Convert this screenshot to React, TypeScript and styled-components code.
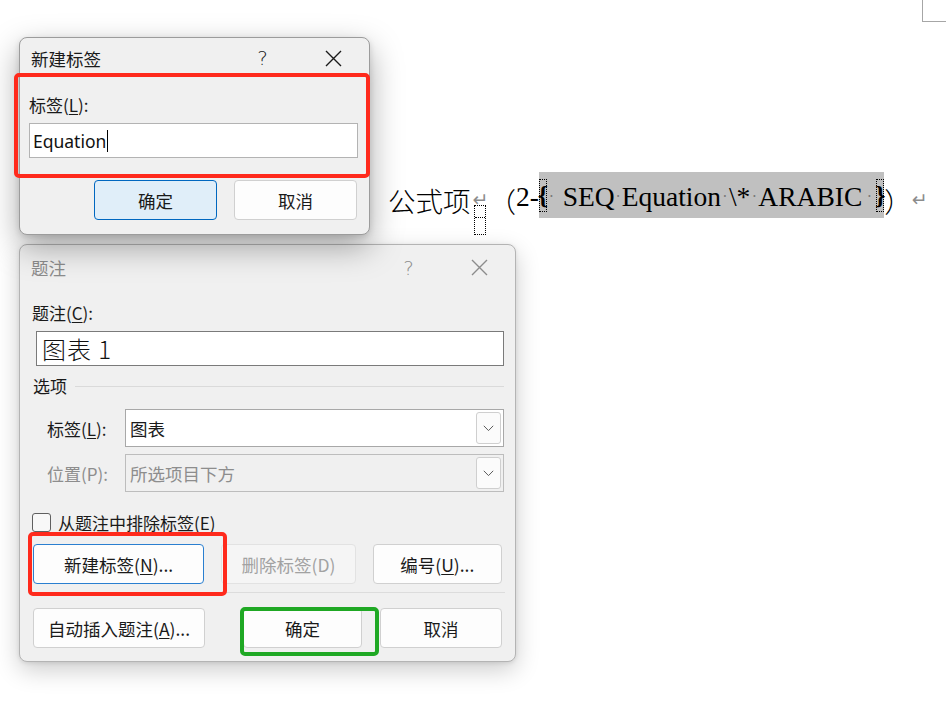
import styled, { createGlobalStyle } from 'styled-components';

const GlobalStyle = createGlobalStyle`
  html, body {
    margin: 0;
    padding: 0;
    background: #ffffff;
  }
  body {
    font-family: "Noto Sans CJK SC", "Noto Sans", sans-serif;
  }
`;

const UI_FONT = `"Noto Sans CJK SC", "Noto Sans", sans-serif`;
const DOC_LATIN = `"Liberation Serif", "Noto Sans CJK SC", serif`;

const Desktop = styled.div`
  position: relative;
  width: 946px;
  height: 703px;
  overflow: hidden;
  background: #ffffff;
`;

const CornerMark = styled.div`
  position: absolute;
  left: 922px;
  top: 0;
  width: 24px;
  height: 21px;
  border-left: 1px solid #a6a6a6;
  border-bottom: 1px solid #a6a6a6;
`;

/* ---------- document line ---------- */

const DocLine = styled.div`
  position: absolute;
  left: 388px;
  top: 172px;
  height: 46px;
  display: flex;
  align-items: center;
  color: #000;
`;

const CjkRun = styled.span`
  font-family: "Noto Sans CJK SC", sans-serif;
  font-size: 27.5px;
  font-weight: 300;
  line-height: 46px;
  padding-top: 10px;
`;

const LatinRun = styled.span`
  font-family: ${DOC_LATIN};
  font-size: 27.5px;
  line-height: 46px;
  padding-top: 4px;
`;

const ParaMarkWrap = styled.span<{ $gap?: number }>`
  position: relative;
  display: inline-flex;
  margin-left: ${(p) => p.$gap ?? 0}px;
`;

const ParaMark = styled.span`
  font-family: "DejaVu Sans", sans-serif;
  font-size: 19px;
  color: #8c8c8c;
  padding-top: 8px;
`;

const AnchorMark = styled.span`
  position: absolute;
  left: 1px;
  top: 25px;
  width: 12px;
  height: 30px;
  border: 1px dotted #000;
  box-sizing: border-box;
  &::after {
    content: '';
    position: absolute;
    left: 0;
    right: 0;
    top: 11px;
    border-top: 1px dotted #000;
  }
`;

const FieldShade = styled.span`
  display: inline-flex;
  align-items: center;
  height: 46px;
  background: #c0c0c0;
`;

const Brace = styled.span`
  display: inline-flex;
  align-items: center;
  justify-content: center;
  width: 8px;
  height: 33px;
  border: 1px dotted #000;
  box-sizing: border-box;
  font-family: ${DOC_LATIN};
  font-weight: bold;
  font-size: 26px;
  line-height: 1;
  padding-top: 2px;
  overflow: visible;
`;

const SpaceDot = styled.span<{ $w?: number }>`
  display: inline-block;
  width: ${(p) => p.$w ?? 8}px;
  text-align: center;
  color: #7a7a7a;
  font-family: "DejaVu Sans", sans-serif;
  font-size: 15px;
  padding-top: 4px;
`;

/* ---------- dialogs ---------- */

const Window = styled.div<{ $x: number; $y: number; $w: number; $h: number; $active?: boolean }>`
  position: absolute;
  left: ${(p) => p.$x}px;
  top: ${(p) => p.$y}px;
  width: ${(p) => p.$w}px;
  height: ${(p) => p.$h}px;
  box-sizing: border-box;
  background: #f0f0f0;
  border: 1px solid ${(p) => (p.$active ? '#9c9c9c' : '#b4b4b4')};
  border-radius: 8px;
  box-shadow: ${(p) =>
    p.$active
      ? '0 12px 32px rgba(0,0,0,0.34), 0 2px 6px rgba(0,0,0,0.12)'
      : '0 8px 24px rgba(0,0,0,0.2), 0 1px 4px rgba(0,0,0,0.1)'};
  font-family: ${UI_FONT};
  font-size: 17px;
  color: #1a1a1a;
  display: flex;
  flex-direction: column;
`;

const TitleBar = styled.div<{ $h: number }>`
  height: ${(p) => p.$h}px;
  flex-shrink: 0;
  display: flex;
  align-items: center;
  padding-left: 11px;
`;

const Title = styled.span<{ $inactive?: boolean }>`
  font-size: 17.5px;
  color: ${(p) => (p.$inactive ? '#8c8c8c' : '#1a1a1a')};
`;

const CaptionButtons = styled.div`
  margin-left: auto;
  display: flex;
  height: 100%;
`;

const CaptionButton = styled.div<{ $inactive?: boolean }>`
  width: 71px;
  height: 100%;
  display: flex;
  align-items: center;
  justify-content: center;
  color: ${(p) => (p.$inactive ? '#8c8c8c' : '#1a1a1a')};
  font-family: "DejaVu Sans", sans-serif;
  font-size: 20px;
  font-weight: 300;
`;

const Body = styled.div<{ $pad: string }>`
  padding: ${(p) => p.$pad};
  display: flex;
  flex-direction: column;
`;

const FieldLabel = styled.div<{ $top: number; $bottom: number }>`
  margin-top: ${(p) => p.$top}px;
  margin-bottom: ${(p) => p.$bottom}px;
  line-height: 24px;
  font-size: 17px;
`;

const Key = styled.span`
  text-decoration: underline;
  text-underline-offset: 2px;
  text-decoration-thickness: 1px;
`;

const TextInput = styled.div<{ $dark?: boolean; $big?: boolean; $ml?: number }>`
  height: 35px;
  box-sizing: border-box;
  margin-left: ${(p) => p.$ml ?? 0}px;
  background: #ffffff;
  border: 1px solid ${(p) => (p.$dark ? '#7a7a7a' : '#b3b3b3')};
  display: flex;
  align-items: center;
  padding-left: ${(p) => (p.$big ? 5 : 3)}px;
  font-size: ${(p) => (p.$big ? 24 : 17.5)}px;
  font-family: ${(p) => (p.$big ? `"Noto Sans CJK SC", sans-serif` : `"Noto Sans", "Noto Sans CJK SC", sans-serif`)};
  font-weight: ${(p) => (p.$big ? 300 : 400)};
  letter-spacing: ${(p) => (p.$big ? '1px' : '0')};
  color: #111;
`;

const Caret = styled.span`
  display: inline-block;
  width: 1px;
  height: 22px;
  background: #000;
  margin-left: 1px;
`;

const ButtonRow = styled.div<{ $top: number; $justify?: string; $ml?: number; $mr?: number }>`
  display: flex;
  justify-content: ${(p) => p.$justify ?? 'flex-start'};
  gap: 17px;
  margin-top: ${(p) => p.$top}px;
  margin-left: ${(p) => p.$ml ?? 0}px;
  margin-right: ${(p) => p.$mr ?? 0}px;
`;

const ButtonGroup = styled.div`
  display: flex;
  gap: 18px;
  margin-left: auto;
`;

type Variant = 'normal' | 'default' | 'focused' | 'disabled';

const Button = styled.div<{ $w: number; $variant?: Variant }>`
  width: ${(p) => p.$w}px;
  height: 40px;
  box-sizing: border-box;
  border-radius: 4px;
  display: flex;
  align-items: center;
  justify-content: center;
  font-size: 17.5px;
  background: ${(p) =>
    p.$variant === 'default' ? '#e0eef9' : p.$variant === 'disabled' ? '#f5f5f5' : '#fdfdfd'};
  border: 1px solid
    ${(p) =>
      p.$variant === 'default'
        ? '#0067c0'
        : p.$variant === 'focused'
          ? '#2a7fd0'
          : p.$variant === 'disabled'
            ? '#e2e2e2'
            : '#d0d0d0'};
  color: ${(p) => (p.$variant === 'disabled' ? '#a2a2a2' : '#1a1a1a')};
`;

const GroupHeader = styled.div`
  margin-top: 7px;
  margin-left: 1px;
  height: 24px;
  display: flex;
  align-items: center;
  gap: 8px;
  &::after {
    content: '';
    flex: 1;
    height: 1px;
    background: #dadada;
    margin-top: 2px;
  }
`;

const SelectRow = styled.div<{ $top: number; $disabled?: boolean }>`
  display: flex;
  align-items: center;
  margin-top: ${(p) => p.$top}px;
  color: ${(p) => (p.$disabled ? '#8d8d8d' : '#1a1a1a')};
`;

const SelectLabel = styled.div`
  width: 78px;
  padding-left: 15px;
`;

const Select = styled.div<{ $disabled?: boolean }>`
  flex: 1;
  height: 38px;
  box-sizing: border-box;
  display: flex;
  align-items: center;
  padding: 2px 2px 2px 4px;
  background: ${(p) => (p.$disabled ? '#f0f0f0' : '#ffffff')};
  border: 1px solid ${(p) => (p.$disabled ? '#bdbdbd' : '#a8a8a8')};
  font-size: 17.5px;
`;

const DropButton = styled.div`
  margin-left: auto;
  width: 25px;
  height: 32px;
  box-sizing: border-box;
  border: 1px solid #cfcfcf;
  border-radius: 3px;
  background: #fbfbfb;
  display: flex;
  align-items: center;
  justify-content: center;
`;

const CheckRow = styled.div`
  margin-top: 21px;
  display: flex;
  align-items: center;
  gap: 7px;
  height: 19px;
`;

const CheckBox = styled.div`
  width: 19px;
  height: 19px;
  box-sizing: border-box;
  border: 1px solid #5f5f5f;
  border-radius: 3px;
  background: #f8f8f8;
`;

const Separator = styled.div`
  margin-top: 8px;
  margin-left: -2px;
  margin-right: -1px;
  height: 1px;
  background: #dcdcdc;
`;

/* ---------- annotation frames ---------- */

const Frame = styled.div<{ $x: number; $y: number; $w: number; $h: number; $color: string }>`
  position: absolute;
  left: ${(p) => p.$x}px;
  top: ${(p) => p.$y}px;
  width: ${(p) => p.$w}px;
  height: ${(p) => p.$h}px;
  box-sizing: border-box;
  border: 4px solid ${(p) => p.$color};
  border-radius: 5px;
  pointer-events: none;
`;

const Chevron = () => (
  <svg width="11" height="7" viewBox="0 0 11 7">
    <polyline points="0.8,0.8 5.5,5.6 10.2,0.8" fill="none" stroke="#5c5c5c" strokeWidth="1" />
  </svg>
);

const CloseIcon = ({ color }: { color: string }) => (
  <svg width="17" height="17" viewBox="0 0 17 17">
    <path d="M1 1 L16 16 M16 1 L1 16" stroke={color} strokeWidth="1.4" fill="none" />
  </svg>
);

const App = () => {
  return (
    <>
      <GlobalStyle />
      <Desktop>
        <CornerMark />

        <DocLine>
          <CjkRun>公式项</CjkRun>
          <ParaMarkWrap $gap={2}>
            <ParaMark>↵</ParaMark>
            <AnchorMark />
          </ParaMarkWrap>
          <CjkRun>（</CjkRun>
          <LatinRun>2-</LatinRun>
          <FieldShade>
            <Brace>{'{'}</Brace>
            <SpaceDot $w={9}>·</SpaceDot>
            <LatinRun>&nbsp;SEQ</LatinRun>
            <SpaceDot $w={7}>·</SpaceDot>
            <LatinRun>Equation</LatinRun>
            <SpaceDot $w={8}>·</SpaceDot>
            <LatinRun>\*</LatinRun>
            <SpaceDot $w={8}>·</SpaceDot>
            <LatinRun>ARABIC</LatinRun>
            <SpaceDot $w={14}>·</SpaceDot>
            <Brace>{'}'}</Brace>
          </FieldShade>
          <CjkRun>）</CjkRun>
          <ParaMarkWrap $gap={0}>
            <ParaMark>↵</ParaMark>
          </ParaMarkWrap>
        </DocLine>

        {/* 题注 dialog (behind) */}
        <Window $x={19} $y={244} $w={497} $h={418}>
          <TitleBar $h={45}>
            <Title $inactive>题注</Title>
            <CaptionButtons>
              <CaptionButton $inactive>?</CaptionButton>
              <CaptionButton $inactive>
                <CloseIcon color="#8c8c8c" />
              </CaptionButton>
            </CaptionButtons>
          </TitleBar>
          <Body $pad="0 11px 0 12px">
            <FieldLabel $top={11} $bottom={6}>
              题注(<Key>C</Key>):
            </FieldLabel>
            <TextInput $dark $big $ml={4}>
              图表 1
            </TextInput>
            <GroupHeader>选项</GroupHeader>
            <SelectRow $top={12}>
              <SelectLabel>
                标签(<Key>L</Key>):
              </SelectLabel>
              <Select>
                图表
                <DropButton>
                  <Chevron />
                </DropButton>
              </Select>
            </SelectRow>
            <SelectRow $top={7} $disabled>
              <SelectLabel>位置(P):</SelectLabel>
              <Select $disabled>
                所选项目下方
                <DropButton>
                  <Chevron />
                </DropButton>
              </Select>
            </SelectRow>
            <CheckRow>
              <CheckBox />
              <span>从题注中排除标签(E)</span>
            </CheckRow>
            <ButtonRow $top={12} $justify="space-between" $ml={1} $mr={2}>
              <Button $w={172} $variant="focused">
                新建标签(<Key>N</Key>)...
              </Button>
              <Button $w={135} $variant="disabled">
                删除标签(D)
              </Button>
              <Button $w={130}>
                编号(<Key>U</Key>)...
              </Button>
            </ButtonRow>
            <Separator />
            <ButtonRow $top={15} $ml={1} $mr={2}>
              <Button $w={172}>
                自动插入题注(<Key>A</Key>)...
              </Button>
              <ButtonGroup>
                <Button $w={119}>确定</Button>
                <Button $w={122}>取消</Button>
              </ButtonGroup>
            </ButtonRow>
          </Body>
        </Window>

        {/* 新建标签 dialog (front) */}
        <Window $x={19} $y={37} $w={351} $h={198} $active>
          <TitleBar $h={40}>
            <Title>新建标签</Title>
            <CaptionButtons>
              <CaptionButton>?</CaptionButton>
              <CaptionButton>
                <CloseIcon color="#1a1a1a" />
              </CaptionButton>
            </CaptionButtons>
          </TitleBar>
          <Body $pad="0 11px 0 9px">
            <FieldLabel $top={15} $bottom={6}>
              标签(<Key>L</Key>):
            </FieldLabel>
            <TextInput>
              Equation
              <Caret />
            </TextInput>
            <ButtonRow $top={22} $justify="flex-end" $mr={1}>
              <Button $w={123} $variant="default">
                确定
              </Button>
              <Button $w={123}>取消</Button>
            </ButtonRow>
          </Body>
        </Window>

        <Frame $x={14} $y={73} $w={356} $h={105} $color="#ff2a1c" />
        <Frame $x={28} $y={532} $w={199} $h={64} $color="#ff2a1c" />
        <Frame $x={240} $y={607} $w={139} $h={49} $color="#1fa824" />
      </Desktop>
    </>
  );
};

export default App;
